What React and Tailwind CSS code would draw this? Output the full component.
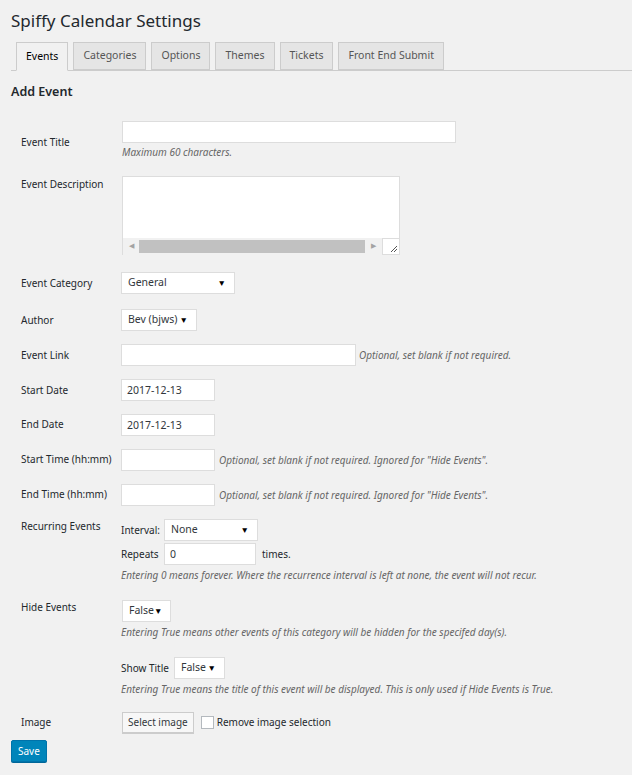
import React from "react";

const tabs = ["Events", "Categories", "Options", "Themes", "Tickets", "Front End Submit"];

function Select({ value, width }) {
  return (
    <div
      className={`flex items-center justify-between h-[22px] bg-white border border-[#ddd] pl-[6px] pr-[8px] text-[10.5px] text-[#32373c] ${width}`}
    >
      <span>{value}</span>
      <span className="text-[8.5px] text-black">▼</span>
    </div>
  );
}

function TextInput({ value = "", width }) {
  return (
    <div className={`h-[22px] bg-white border border-[#ddd] pl-[5px] text-[10.5px] leading-[20px] text-[#32373c] ${width}`}>
      {value}
    </div>
  );
}

function Help({ children, className = "" }) {
  return <p className={`italic text-[10px] leading-[14px] text-[#666] whitespace-nowrap ${className}`}>{children}</p>;
}

function Row({ label, top, labelTop, children }) {
  return (
    <div className={`flex items-start ${top}`}>
      <div className={`w-[121px] pl-[21px] text-[10px] leading-[14px] text-[#23282d] whitespace-nowrap shrink-0 ${labelTop}`}>
        {label}
      </div>
      <div className="flex-1">{children}</div>
    </div>
  );
}

export default function App() {
  return (
    <div
      className="w-[632px] h-[775px] bg-[#f1f1f1] text-[#23282d] overflow-hidden"
      style={{ fontFamily: '"Noto Sans", "Open Sans", sans-serif' }}
    >
      <div className="pl-[11px]">
        <h1 className="pt-[9px] text-[17px] leading-[24px] text-[#23282d]">Spiffy Calendar Settings</h1>

        <div className="mt-[9px] flex items-end border-b border-[#ccc] pl-[5px] h-[29px]">
          {tabs.map((t, i) => (
            <div
              key={t}
              className={`mr-[5px] px-[9px] flex items-center border border-[#ccc] text-[10.5px] ${
                i === 0
                  ? "h-[29px] bg-[#f1f1f1] border-b-[#f1f1f1] text-black -mb-px"
                  : "h-[28px] bg-[#e5e5e5] text-[#555]"
              }`}
            >
              {t}
            </div>
          ))}
        </div>

        <h2 className="mt-[11px] text-[12.5px] leading-[20px] font-semibold text-[#23282d]">Add Event</h2>
      </div>

      <div className="mt-[19px]">
        <Row label="Event Title" top="" labelTop="pt-[14px]">
          <div className="ml-px">
            <TextInput width="w-[334px]" />
            <Help className="mt-[2px]">Maximum 60 characters.</Help>
          </div>
        </Row>

        <Row label="Event Description" top="mt-[17px]" labelTop="pt-[1px]">
          <div className="ml-px w-[278px]">
            <div className="h-[62px] bg-white border border-b-0 border-[#ddd]"></div>
            <div className="flex h-[17px] items-center border-l border-[#ddd]">
              <span className="w-[16px] text-center text-[7px] text-[#a3a3a3]">◀</span>
              <div className="h-[13px] w-[226px] bg-[#c1c1c1]"></div>
              <span className="w-[17px] text-center text-[7px] text-[#a3a3a3]">▶</span>
              <div className="relative h-[17px] flex-1 bg-white border border-[#ddd]">
                <svg className="absolute right-[1px] bottom-[1px]" width="10" height="10" viewBox="0 0 10 10">
                  <path d="M9 3 L3 9 M9 6 L6 9" stroke="#555" strokeWidth="1" />
                </svg>
              </div>
            </div>
          </div>
        </Row>

        <Row label="Event Category" top="mt-[17px]" labelTop="pt-[4px]">
          <Select value="General" width="w-[114px]" />
        </Row>

        <Row label="Author" top="mt-[15px]" labelTop="pt-[4px]">
          <Select value="Bev (bjws)" width="w-[76px]" />
        </Row>

        <Row label="Event Link" top="mt-[13px]" labelTop="pt-[4px]">
          <div className="flex items-center gap-[3px]">
            <TextInput width="w-[235px]" />
            <Help>Optional, set blank if not required.</Help>
          </div>
        </Row>

        <Row label="Start Date" top="mt-[13px]" labelTop="pt-[4px]">
          <TextInput value="2017-12-13" width="w-[94px]" />
        </Row>

        <Row label="End Date" top="mt-[13px]" labelTop="pt-[3px]">
          <TextInput value="2017-12-13" width="w-[94px]" />
        </Row>

        <Row label="Start Time (hh:mm)" top="mt-[13px]" labelTop="pt-[3px]">
          <div className="flex items-center gap-[4px]">
            <TextInput width="w-[94px]" />
            <Help>Optional, set blank if not required. Ignored for "Hide Events".</Help>
          </div>
        </Row>

        <Row label="End Time (hh:mm)" top="mt-[13px]" labelTop="pt-[3px]">
          <div className="flex items-center gap-[4px]">
            <TextInput width="w-[94px]" />
            <Help>Optional, set blank if not required. Ignored for "Hide Events".</Help>
          </div>
        </Row>

        <Row label="Recurring Events" top="mt-[13px]" labelTop="pt-0">
          <div className="flex items-center text-[10px]">
            <span className="w-[43px]">Interval:</span>
            <Select value="None" width="w-[94px]" />
          </div>
          <div className="flex items-center text-[10px] mt-[2px]">
            <span className="w-[43px]">Repeats</span>
            <TextInput value="0" width="w-[92px]" />
            <span className="ml-[6px]">times.</span>
          </div>
          <Help className="mt-[3px]">
            Entering 0 means forever. Where the recurrence interval is left at none, the event will not recur.
          </Help>
        </Row>

        <Row label="Hide Events" top="mt-[18px]" labelTop="pt-0">
          <div className="ml-px">
            <Select value="False" width="w-[49px]" />
          </div>
          <Help className="mt-[3px]">
            Entering True means other events of this category will be hidden for the specifed day(s).
          </Help>
          <div className="flex items-center text-[10px] mt-[18px]">
            <span className="w-[53px]">Show Title</span>
            <Select value="False" width="w-[51px]" />
          </div>
          <Help className="mt-[3px]">
            Entering True means the title of this event will be displayed. This is only used if Hide Events is True.
          </Help>
        </Row>

        <Row label="Image" top="mt-[16px]" labelTop="pt-[3px]">
          <div className="flex items-center text-[10px] ml-px">
            <div className="h-[21px] px-[5px] flex items-center border border-[#ccc] bg-[#f7f7f7] text-[#32373c] shadow-[0_1px_0_#ccc]">
              Select image
            </div>
            <div className="ml-[7px] w-[13px] h-[13px] bg-white border border-[#b4b9be]"></div>
            <span className="ml-[3px]">Remove image selection</span>
          </div>
        </Row>

        <div className="flex pl-[11px] mt-[7px]">
          <div className="flex h-[22px] px-[6px] items-center bg-[#0085ba] border border-[#0073aa] text-white text-[10px] rounded-[2px] shadow-[0_1px_0_#006799]">
            Save
          </div>
        </div>
      </div>
    </div>
  );
}
